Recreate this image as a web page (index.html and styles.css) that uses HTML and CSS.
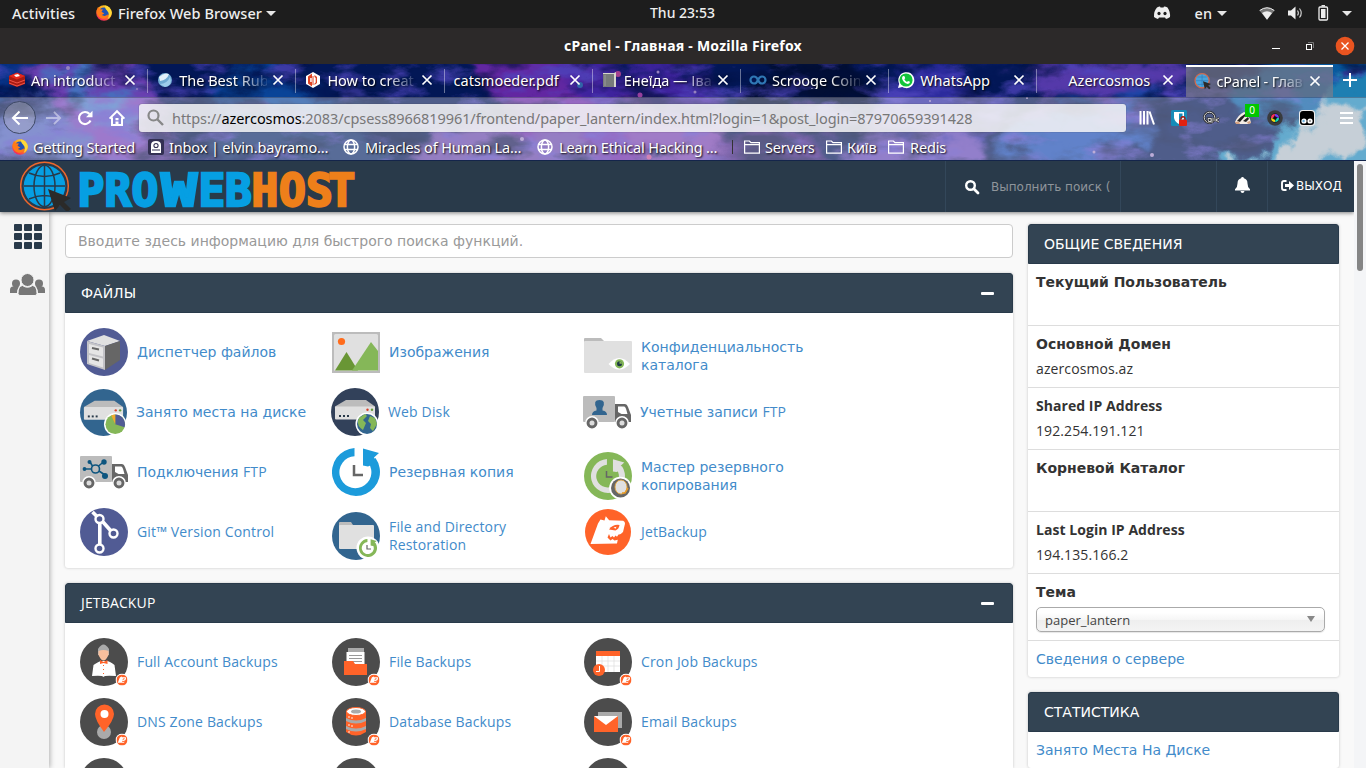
FILE: index.html
```html
<!DOCTYPE html>
<html lang="ru">
<head>
<meta charset="utf-8">
<title>cPanel - Главная</title>
<link rel="stylesheet" href="styles.css">
</head>
<body>
<svg class="defs" width="0" height="0">
  <defs>
    <linearGradient id="foxg" x1="0.8" y1="0" x2="0.2" y2="1"><stop offset="0" stop-color="#ffe226"/><stop offset=".5" stop-color="#ff8a16"/><stop offset="1" stop-color="#f5156c"/></linearGradient>
    <symbol id="fox" viewBox="0 0 16 16"><circle cx="8" cy="8" r="7.8" fill="url(#foxg)"/><circle cx="8" cy="7.4" r="5" fill="#2053b5"/><path d="M9 .4c4 1 6.600 4 6.800 7.200-.2 3-2 5.400-4.200 6.400 2-3 1.800-6-.6-8.500C9.700 4 8.600 2.200 9 .4z" fill="#ffd93a"/><path d="M.6 5.500L2 2l2 2.200 3 .3-1.500 2.300 2.800 1.600-2.500 1.700c2 1.500 5 .8 6.500-1-.5 3.500-3.500 5.400-6.500 4.500C2.500 12.600.3 9 .6 5.500z" fill="#ff7a18"/></symbol>
    <symbol id="x" viewBox="0 0 12 12"><path d="M1.500 1.500l9 9M10.500 1.500l-9 9" stroke="#fff" stroke-width="1.700" fill="none"/></symbol>
    <symbol id="globe" viewBox="0 0 16 16"><g fill="none" stroke="#fff" stroke-width="1.500"><circle cx="8" cy="8" r="7"/><ellipse cx="8" cy="8" rx="3.600" ry="7"/><path d="M1.500 5.500h13M1.500 10.500h13"/></g></symbol>
    <symbol id="folder" viewBox="0 0 16 16"><path d="M.6 14.200V2h4.800l1.600 1.600h8.400v10.600zM.6 5.600h14.800" fill="none" stroke="#fff" stroke-width="1.200"/></symbol>
    <symbol id="hostglobe" viewBox="0 0 52 50"><circle cx="24.500" cy="25" r="23.800" fill="#293a4a" stroke="#ee672c" stroke-width="1.500"/><circle cx="24.500" cy="25" r="20.800" fill="#069fe3"/><g fill="none" stroke="#293a4a" stroke-width="1.500"><ellipse cx="24.500" cy="25" rx="10.500" ry="20.800"/><path d="M24.500 4v42M4 25h41M9 12q15.500 7 31 0M9 38q15.500-7 31 0"/></g><path d="M28 28l23 9-7 4 7 7-4 3-7-7-5 6z" fill="#2b2a29"/></symbol>
    <symbol id="jb" viewBox="0 0 46 46"><circle cx="23" cy="23" r="23" fill="#ff6329"/><path d="M5.500 35l7.500-20.500 2.500-4 4 1 1.300-4.200 3.400 4 14 .4q2 .8 1.800 3L38 23l-4.500 4-1.500 7.500z" fill="#fff"/><path d="M24 20.500q4-5.500 10.500-4.500-.5 4-4 5.500z" fill="#ff6329"/><path d="M28.500 18.500l3-.8-1 2z" fill="#fff"/><path d="M24 25l1.500 3.500 2-1.500 1.500 1.500 1.500-2 1.500 1.300 1.500-2.300 5-.500-4.500 5.500-4.500 1-2-1.500-2 1.500-3-3z" fill="#ff6329"/></symbol>
    <symbol id="truck" viewBox="0 0 48 48"><rect x="0" y="8" width="32" height="26" rx="1" fill="#bcbcbc"/><path d="M32 16h10q2 0 3 3l3 8v7H32z" fill="#666"/><path d="M35 18.500h6q1.500 0 2.500 4l1 3.500h-6l-3.500-2z" fill="#fff"/><g fill="#666" stroke="#fff" stroke-width="1.500"><circle cx="9" cy="35" r="6.200"/><circle cx="39" cy="35" r="6.200"/></g><circle cx="9" cy="35" r="2.500" fill="#ddd"/><circle cx="39" cy="35" r="2.500" fill="#ddd"/></symbol>
    <symbol id="server" viewBox="0 0 48 48"><path d="M4 18.500L15 12h20l9 6.500v3H4z" fill="#bcbcbc"/><rect x="4" y="18.500" width="40" height="13" rx="1" fill="#e0e0e0"/><g fill="#293a4a"><rect x="8" y="27" width="2" height="2"/><rect x="12" y="27" width="2" height="2"/><rect x="16" y="27" width="2" height="2"/></g><circle cx="36.500" cy="21.800" r="1.200" fill="#d9412b"/><circle cx="41" cy="21.800" r="1.200" fill="#639b35"/></symbol>
    <symbol id="restore" viewBox="0 0 48 48"><path d="M22.500 0A24 24 0 1 0 43.500 10L36.500 15A16 16 0 1 1 22.500 8.200z" fill="currentColor"/><path d="M31 0.500l16 4.500-5 4.500 3 5-9 4-5-1z" fill="currentColor"/></symbol>
    <symbol id="badge" viewBox="0 0 48 48"><circle cx="24" cy="24" r="24" fill="#4c4c4c"/></symbol>
    <symbol id="mini" viewBox="0 0 13 13"><circle cx="6.500" cy="6.500" r="6.500" fill="#fff"/><use href="#jb" x="1" y="1" width="11" height="11"/></symbol>
  </defs>
</svg>

<header class="shellbar">
  <span class="activities">Activities</span>
  <svg class="i16"><use href="#fox"/></svg>
  <span class="appname">Firefox Web Browser</span>
  <i class="caret"></i>
  <span class="clock">Thu 23:53</span>
  <div class="tray">
    <svg width="18" height="14" viewBox="0 0 18 14"><path d="M4 1.500Q6 .5 7 .6l.5.9h3l.5-.9q2 0 3.500.9Q17.500 6 17 11q-2 1.700-4 2l-1-1.500H6L5 13q-2-.3-4-2Q.7 5 4 1.500z" fill="#eee"/><ellipse cx="6" cy="7.500" rx="1.600" ry="1.800" fill="#1d1d1d"/><ellipse cx="12" cy="7.500" rx="1.600" ry="1.800" fill="#1d1d1d"/></svg>
    <span class="lang">en</span><i class="caret"></i>
    <svg class="wifi" width="16" height="13" viewBox="0 0 16 13"><path d="M.5 3.500Q8-2.500 15.500 3.500L8 12.800z" fill="#777"/><path d="M3 6Q8 2.500 13 6L8 12.800z" fill="#eee"/><path d="M.7 3.500Q8-2 15.300 3.500" fill="none" stroke="#eee"/></svg>
    <svg class="vol" width="16" height="14" viewBox="0 0 16 14"><path d="M0 4.500h3L7.500.5v13L3 9.500H0z" fill="#eee"/><path d="M9.500 4.500q1.800 2.500 0 5M11.500 2.500q3.500 4.500 0 9" fill="none" stroke="#ccc" stroke-width="1.200"/></svg>
    <svg class="bat" width="11" height="16" viewBox="0 0 11 16"><rect x="1" y="2" width="8.500" height="13" rx="1" fill="none" stroke="#eee" stroke-width="1.300"/><rect x="3" y="4" width="4.500" height="9" fill="#eee"/><path d="M3.500.8h3.500" stroke="#eee" stroke-width="1.500"/></svg>
    <i class="caret"></i>
  </div>
</header>

<div class="titlebar">
  <span class="wintitle">cPanel - Главная - Mozilla Firefox</span>
  <div class="winbtns">
    <i class="min"></i>
    <svg width="10" height="10" viewBox="0 0 10 10" fill="none"><path d="M3 1.500h5.500V7" stroke="#777"/><rect x="1.500" y="3.500" width="5" height="5" stroke="#fff"/></svg>
    <svg class="close" width="20" height="20" viewBox="0 0 20 20"><circle cx="10" cy="10" r="9.300" fill="#e95420"/><path d="M6.500 6.500l7 7M13.500 6.500l-7 7" stroke="#fff" stroke-width="1.300"/></svg>
  </div>
</div>

<section class="browser">
  <svg class="sky" width="1366" height="97" viewBox="0 0 1366 97">
    <defs>
      <filter id="soft" x="-20%" y="-60%" width="140%" height="220%" color-interpolation-filters="sRGB"><feGaussianBlur stdDeviation="7" result="b"/><feTurbulence type="fractalNoise" baseFrequency=".018 .03" numOctaves="5" seed="8"/><feDisplacementMap in="b" scale="85" xChannelSelector="R" yChannelSelector="G"/></filter>
      <filter id="cloud" x="-20%" y="-20%" width="140%" height="140%" color-interpolation-filters="sRGB"><feGaussianBlur stdDeviation="2.500" result="b"/><feTurbulence type="fractalNoise" baseFrequency=".04" numOctaves="4" seed="3"/><feDisplacementMap in="b" scale="32" xChannelSelector="R" yChannelSelector="G"/></filter>
      <filter id="dust" x="0" y="0" width="100%" height="100%" color-interpolation-filters="sRGB"><feTurbulence type="fractalNoise" baseFrequency=".022 .05" numOctaves="6" seed="21"/><feColorMatrix values="0 0 0 0 .45  0 0 0 0 .38  0 0 0 0 1  4 0 0 0 -2.050"/></filter>
      <filter id="dark" x="0" y="0" width="100%" height="100%" color-interpolation-filters="sRGB"><feTurbulence type="fractalNoise" baseFrequency=".015 .035" numOctaves="5" seed="5"/><feColorMatrix values="0 0 0 0 0  0 0 0 0 .07  0 0 0 0 .27  0 4 0 0 -2.050"/></filter>
    </defs>
    <rect width="1366" height="97" fill="#041f6b"/>
    <g filter="url(#soft)">
      <path d="M30-20L110-10 220 120H90z" fill="#9a55ea"/><path d="M-10 60L60 40 120 120H-20z" fill="#6b83f0"/><path d="M55-10l30 0 45 60-30 10z" fill="#62a0ff"/><path d="M200 20l70-30 60 60-70 30z" fill="#0e5fc9"/><path d="M-20-10h70l-40 50z" fill="#0a49b5"/><path d="M240 50h130l20 60H220z" fill="#163d86"/>
      <path d="M460-20h130l170 130H540z" fill="#8d35d6"/><path d="M560-10h120l60 60H600z" fill="#5a30d0"/><path d="M440 60h110l60 60H400z" fill="#8a5fd8"/><path d="M610 60h120l30 50H640z" fill="#a05ae0"/><path d="M750 60h90l-40 60H700z" fill="#5a2ea8"/>
      <path d="M880 10l110-20 10 70-120 60z" fill="#3f3bd0"/><path d="M1020-10h180l-50 50-110-10z" fill="#7a50e2"/><path d="M1050 40h120l-90 60h-100z" fill="#2767e6"/><path d="M870 60h90l20 60H840z" fill="#8560e8"/><path d="M1230 0l150-30v90h-130z" fill="#0a7ad0"/><path d="M760-10h110v60H760z" fill="#02123a"/>
    </g>
    <rect width="1366" height="97" filter="url(#dust)" opacity=".75"/>
    <rect width="1366" height="97" filter="url(#dark)" opacity=".7"/>
    <g filter="url(#cloud)"><path d="M1190 115l35-22 40 4 15-30 40-16 12-30 50-15V115z" fill="#2cb4ee"/><path d="M1215 120l20-22 40 4 20-32 22-12 10-26 22 8 20 0-4 38-50 24-20 18z" fill="#e8faff"/></g>
    <g fill="#d6b7ff"><circle cx="68" cy="4" r="2"/><circle cx="137" cy="25" r="1"/><circle cx="209" cy="17" r="1"/><circle cx="618" cy="10" r="3" fill="#e858b9"/><circle cx="658" cy="8" r="1.500"/><circle cx="640" cy="31" r="2.500" fill="#d858ce"/><circle cx="580" cy="21" r="3" fill="#458ddf"/><circle cx="562" cy="61" r="7" fill="#7ac7ff" opacity=".5"/><circle cx="522" cy="75" r="2"/><circle cx="649" cy="93" r="2.500" fill="#ff68bd"/><circle cx="695" cy="28" r="1.500"/><circle cx="1094" cy="88" r="1.500"/><circle cx="1152" cy="91" r="2"/><circle cx="1027" cy="34" r="1"/><circle cx="930" cy="37" r="1"/></g>
  </svg>
  <div class="chrome">
    <nav class="tabs">
      <div class="tab"><svg class="fav" viewBox="0 0 16 16"><path d="M0 4l8-3 8 3v8l-8 3-8-3z" fill="#a91b12"/><path d="M0 4l8-3.500L16 4 8 7.500z" fill="#e5281d"/><path d="M0 8l8 3 8-3M0 11l8 3 8-3" stroke="#f05448" fill="none"/><path d="M5 3l4-1 2 2-4 1z" fill="#fff"/></svg><span>An introduct</span><svg class="cl"><use href="#x"/></svg></div>
      <div class="tab"><svg class="fav" viewBox="0 0 16 16"><circle cx="8" cy="8" r="7" fill="#6ea9d2"/><path d="M2 5q5-5 10-3Q10 8 3 9z" fill="#e3f2fa"/><path d="M3 12q7 0 10-7 3 8-5 10z" fill="#9dccea"/></svg><span>The Best Rub</span><svg class="cl"><use href="#x"/></svg></div>
      <div class="tab"><svg class="fav" viewBox="0 0 16 16"><path d="M8 0l7 4v8l-7 4-7-4V4z" fill="#fff"/><path d="M7 1.500L3 4.500v7l4 3zM9.500 3l2.500 2v6l-2.500 2v-1.500l1.200-1V6L9.500 5z" fill="#df4323"/><path d="M5.200 6h1.500v4H5.200z" fill="#fff"/><path d="M8 4v9" stroke="#df4323"/></svg><span>How to creat</span><svg class="cl"><use href="#x"/></svg></div>
      <div class="tab noicon"><span>catsmoeder.pdf</span><svg class="cl"><use href="#x"/></svg></div>
      <div class="tab"><svg class="fav" viewBox="0 0 16 16"><path d="M1 1h11l2-1v15H2l-1-1z" fill="#d6d6ce"/><path d="M1 2h11v13H2l-1-1z" fill="#777b7b"/><path d="M3 3v11" stroke="#999"/></svg><span>Енеїда — Іва</span><svg class="cl"><use href="#x"/></svg></div>
      <div class="tab"><svg class="fav" viewBox="0 0 16 16"><path d="M8 8Q6.500 4.500 4 4.500a3.400 3.400 0 0 0 0 7Q6.500 11.500 8 8q1.500-3.500 4-3.500a3.400 3.400 0 0 1 0 7Q9.500 11.500 8 8z" fill="none" stroke="#2f78b5" stroke-width="2.200"/></svg><span>Scrooge Coin</span><svg class="cl"><use href="#x"/></svg></div>
      <div class="tab"><svg class="fav" viewBox="0 0 16 16"><path d="M0 16l1.200-4.200A8 8 0 1 1 4.200 15z" fill="#fff"/><circle cx="8" cy="8" r="6.600" fill="#12c53b"/><path d="M5 4l1.500.2.700 2-.9 1Q7.500 9.500 9 10l1-1 2 .8q0 2-2.200 2.200Q5 11 4 6.200 4.100 4.700 5 4z" fill="#fff"/></svg><span class="whole">WhatsApp</span><svg class="cl"><use href="#x"/></svg></div>
      <div class="tab last"><i class="fav"></i><span>Azercosmos</span><svg class="cl"><use href="#x"/></svg></div>
      <div class="tab active"><svg class="fav" viewBox="0 0 52 50"><circle cx="23" cy="24" r="23" fill="#4aa4dd" stroke="#d26a4e" stroke-width="4"/><path d="M23 4v40M3 24h40M8 12h30M8 36h30" stroke="#2d7bb5" stroke-width="2"/><path d="M26 26l26 9-9 5 8 8-5 4-8-8-6 8z" fill="#2b2a29"/></svg><span>cPanel - Глав</span><svg class="cl"><use href="#x"/></svg></div>
      <svg class="plus" width="14" height="14" viewBox="0 0 14 14"><path d="M7 0v14M0 7h14" stroke="#fff" stroke-width="2"/></svg>
    </nav>
    <div class="toolbar">
      <span class="back"><svg width="18" height="16" viewBox="0 0 18 16"><path d="M17 8H2M8.500 1.500L2 8l6.500 6.500" fill="none" stroke="#fff" stroke-width="2"/></svg></span>
      <svg class="fwd" width="17" height="16" viewBox="0 0 18 16"><path d="M1 8h15M9.500 1.500L16 8l-6.500 6.500" fill="none" stroke="#fff" stroke-width="2" opacity=".45"/></svg>
      <svg class="reload" width="16" height="16" viewBox="0 0 16 16"><path d="M13.500 10.500A6 6 0 1 1 12.500 4" fill="none" stroke="#fff" stroke-width="2.200"/><path d="M15.500.8v6.500H9z" fill="#fff"/></svg>
      <svg class="home" width="16" height="16" viewBox="0 0 16 16"><path d="M.6 8.600L8 1.200l7.400 7.400M3 7.500V15h10V7.500" fill="none" stroke="#fff" stroke-width="2"/><path d="M6.500 8h3v2.200h-3zM6.500 11.500h3V15h-3z" fill="#fff"/></svg>
      <div class="url"><svg width="17" height="17" viewBox="0 0 17 17"><circle cx="6.500" cy="6.500" r="5" fill="none" stroke="#888" stroke-width="2.200"/><path d="M10 10l6 6" stroke="#888" stroke-width="2.400"/></svg><span>https://<b>azercosmos</b>:2083/cpsess8966819961/frontend/paper_lantern/index.html?login=1&amp;post_login=87970659391428</span></div>
      <div class="exts">
        <svg width="16" height="16" viewBox="0 0 16 16"><path d="M1.500 1v13.500M5 1v13.500M8.500 1v13.500M10.500 1.500l4.500 13" stroke="#fff" stroke-width="2" fill="none"/></svg>
        <svg width="16" height="16" viewBox="0 0 16 16"><rect width="16" height="16" rx="1.500" fill="#168cb8"/><path d="M3 2h10v6q-1 4-5 6-4-2-5-6z" fill="#fff"/><path d="M8 3.500h3.500V8L8 12z" fill="#168cb8"/><rect x="8" y="9.500" width="8" height="6.500" rx="1" fill="#e22110"/><path d="M10 9.500V8q2-2.500 4 0v1.500" fill="none" stroke="#b01508" stroke-width="1.300"/></svg>
        <svg width="16" height="16" viewBox="0 0 16 16"><circle cx="6.500" cy="7.500" r="5.300" fill="none" stroke="#222" stroke-width="2.400"/><circle cx="6.500" cy="7.500" r="5.300" fill="none" stroke="#ddd" stroke-width="1"/><path d="M5 8.500h3v3H5.500zM9 8v5M11 8v3M13 8.500v3M13 10l3-2M13 10l3 2" stroke="#222" stroke-width="2.200" fill="none"/><path d="M5 8.500h3v3H5.500zM9 8v5M11 8v3M13 8.500v3M13 10l3-2M13 10l3 2" stroke="#e5e5e5" stroke-width=".9" fill="none"/></svg>
        <span class="badger"><svg width="16" height="16" viewBox="0 0 16 16"><path d="M0 12Q3 5 9 2l2 1 4 6 1 4-3 1-11 0z" fill="#f3ece6"/><path d="M2 11q4-5 8-7l1 1-6 7zM8 11l5-4 1 2-3 3z" fill="#222"/><path d="M0 12l4-.500 1 2.500-4 0zM12 12l3-1 1 2-3 1z" fill="#d9a483"/></svg><b>0</b></span>
        <svg width="16" height="16" viewBox="0 0 16 16"><circle cx="8" cy="8" r="7.800" fill="#393b3d"/><circle cx="8" cy="8" r="4.600" fill="#111"/><path d="M8 4a4 4 0 0 0-4 4h3z" fill="#ff335c"/><path d="M4 8a4 4 0 0 0 4 4V9z" fill="#efd516"/><path d="M8 12a4 4 0 0 0 4-4H9z" fill="#10d7b4"/><path d="M12 8a4 4 0 0 0-4-4v3z" fill="#743df3"/><circle cx="8" cy="8" r="1.800" fill="#111"/></svg>
        <svg width="16" height="16" viewBox="0 0 16 16"><rect width="16" height="16" rx="3.500" fill="#eee"/><rect x="1" y="1" width="14" height="14" rx="3" fill="#000"/><circle cx="5" cy="11" r="2.600" fill="#fff"/><circle cx="11" cy="11" r="2.600" fill="#fff"/><circle cx="4.600" cy="11" r="1.200" fill="#6eb4df"/><circle cx="11" cy="11" r="1" fill="#888"/></svg>
        <i class="burger"></i>
      </div>
    </div>
    <div class="bookmarks">
      <a class="k1"><svg class="i16"><use href="#fox"/></svg>Getting Started</a>
      <a class="k2"><svg class="i16" viewBox="0 0 16 16"><rect width="16" height="16" rx="2" fill="#333053"/><path d="M3 6q0-4 5-4t5 4v8H3z" fill="#fff"/><circle cx="8" cy="6.500" r="2.600" fill="#333053"/><circle cx="8" cy="6.500" r="1.500" fill="#fff"/><path d="M4 11h8" stroke="#333053"/></svg>Inbox | elvin.bayramo…</a>
      <a class="k3"><svg class="i16"><use href="#globe"/></svg>Miracles of Human La…</a>
      <a class="k4"><svg class="i16"><use href="#globe"/></svg>Learn Ethical Hacking …</a>
      <i class="bsep"></i>
      <a class="k5"><svg class="i16"><use href="#folder"/></svg>Servers</a>
      <a class="k6"><svg class="i16"><use href="#folder"/></svg>Київ</a>
      <a class="k7"><svg class="i16"><use href="#folder"/></svg>Redis</a>
    </div>
  </div>
</section>

<div class="page">
  <header class="cphead">
    <svg class="logo" width="340" height="51" viewBox="0 0 340 51"><use href="#hostglobe" x="0" y="0" width="52" height="50"/><g class="logotext"><g fill="#069fe3" stroke="#069fe3"><text x="57.500 84.500 111.500" y="44.500">PRO</text><text x="141" y="44.500" textLength="36" lengthAdjust="spacingAndGlyphs">W</text><text x="178.500 205" y="44.500">EB</text></g><text x="231.500 259 286 308.500" y="44.500" fill="#ee7f1a" stroke="#ee7f1a">HOST</text></g></svg>
    <div class="hcell search"><svg width="14" height="14" viewBox="0 0 14 14"><circle cx="5.500" cy="5.500" r="4.300" fill="none" stroke="#fff" stroke-width="2.400"/><path d="M9 9l4 4" stroke="#fff" stroke-width="2.800" stroke-linecap="round"/></svg><span>Выполнить поиск (</span></div>
    <div class="hcell user"></div>
    <div class="hcell bell"><svg width="15" height="16" viewBox="0 0 15 16"><path d="M7.500 0q1.300 0 1.400 1.300 3.600 1 3.600 5.200 0 4 2.500 5.800V13.500H0v-1.200q2.500-1.800 2.500-5.800 0-4.200 3.600-5.200Q6.200 0 7.500 0zM5.500 14h4q-.3 2-2 2t-2-2z" fill="#fff"/></svg></div>
    <div class="hcell exit"><svg width="13" height="11" viewBox="0 0 13 11"><path d="M5.500 1H3Q1 1 1 3v5q0 2 2 2h2.500" fill="none" stroke="#fff" stroke-width="1.900"/><path d="M4 4h4V1l5 4.500L8 10V7H4z" fill="#fff"/></svg><span>ВЫХОД</span></div>
  </header>
  <div class="body">
    <aside class="rail">
      <svg width="28" height="25" viewBox="0 0 28 25" fill="#293a4a"><g id="r"><rect width="8" height="7" rx="1"/><rect x="10" width="8" height="7" rx="1"/><rect x="20" width="8" height="7" rx="1"/></g><use href="#r" y="9"/><use href="#r" y="18"/></svg>
      <svg width="36" height="22" viewBox="0 0 36 22" fill="#777"><circle cx="6" cy="9.500" r="4"/><circle cx="29" cy="9.500" r="4"/><path d="M0 19v-3q0-3.500 3-3.500h6q-2 3-2 6.500zM35 19v-3q0-3.500-3-3.500h-6q2 3 2 6.500z"/><circle cx="17.500" cy="6" r="6.500" stroke="#f4f4f4"/><path d="M8 19.500q0-7.500 4.500-8 5 3.500 10 0 4.500.5 4.500 8 0 2-2 2H10q-2 0-2-2z" stroke="#f4f4f4"/></svg>
    </aside>
    <main>
      <div class="find">Вводите здесь информацию для быстрого поиска функций.</div>
      <section class="panel">
        <h2><span>ФАЙЛЫ</span><i></i></h2>
        <div class="grid">
          <a><svg viewBox="0 0 48 48"><circle cx="24" cy="24" r="24" fill="#515b94"/><path d="M7 13l17-6 16 6-15 5z" fill="#e0e0e0"/><path d="M7 13l18 5v24L7 36z" fill="#c3c3c7"/><path d="M25 18l15-5v19l-15 10z" fill="#666"/><path d="M9 16l14 3.500v9L9 25zM9 27l14 3.500v9L9 35z" fill="#e5e5e5"/><path d="M12 20l7 1.500M12 30.500l7 2" stroke="#666" stroke-width="2"/></svg><span>Диспетчер файлов</span></a>
          <a><svg viewBox="0 0 48 48"><rect y="4" width="48" height="41" fill="#bcbcbc"/><rect x="2" y="6" width="44" height="37" rx="1.500" fill="#e0e0e0"/><circle cx="9.500" cy="13.500" r="3.600" fill="#ff6c1c"/><path d="M3 42.500L14.500 24 26 42.500z" fill="#699635"/><path d="M20 42.500L39 14l7 9v19.500z" fill="#85b758"/></svg><span>Изображения</span></a>
          <a class="two"><svg viewBox="0 0 48 48"><path d="M0 10V7q0-1 1-1h16l3 3v3H0z" fill="#bcbcbc"/><rect y="9" width="48" height="32" rx="1" fill="#e0e0e0"/><path d="M24.500 32Q35 20 46 32 35 43 24.500 32z" fill="#fff"/><circle cx="35.500" cy="31.800" r="4.600" fill="#85b758"/><circle cx="35.500" cy="31.800" r="2.500" fill="#1f3845"/><path d="M35.500 31.800v-2.500q2.500 0 2.500 2.500z" fill="#85b758"/></svg><span>Конфиденциальность<br>каталога</span></a>
          <a class="narrow"><svg viewBox="0 0 48 48"><circle cx="24" cy="24" r="24" fill="#32658f"/><use href="#server" width="48" height="48"/><circle cx="36" cy="36" r="11.500" fill="#fff"/><circle cx="36" cy="36" r="10" fill="#85b758"/><path d="M36 36V26a10 10 0 0 1 9.500 13z" fill="#515b94"/><path d="M36 36V26q-2 0-4 1z" fill="#efaa2d"/></svg><span>Занято места на диске</span></a>
          <a class="nudge"><svg viewBox="0 0 48 48"><circle cx="24" cy="24" r="24" fill="#32415a"/><use href="#server" width="48" height="48"/><circle cx="36" cy="36" r="11.500" fill="#fff"/><circle cx="36" cy="36" r="10" fill="#32658f"/><path d="M28 30l6-4 2 2-4 4 3 3-3 7q-6-4-5-9zM39 28l5 2 2 6-4 7-3-3 1-4-3-3z" fill="#85b758"/></svg><span class="lat">Web Disk</span></a>
          <a class="nudge"><svg viewBox="0 0 48 48"><use href="#truck" width="48" height="48"/><path d="M9 27q0-4 4.500-4.500V20q-4-8 3-8t3 8v2.500Q24 23 24 27z" fill="#32658f"/></svg><span>Учетные записи <b class="lat">FTP</b></span></a>
          <a><svg viewBox="0 0 48 48"><use href="#truck" width="48" height="48"/><g stroke="#0d557f" stroke-width="1.600" fill="none"><circle cx="15.500" cy="21" r="4"/><path d="M12.500 18L10 14M18.500 18l5-4M11 21H5M19 23l6 4"/></g><g fill="#0d557f"><circle cx="9.500" cy="14" r="2"/><circle cx="24" cy="14" r="2.700"/><circle cx="4.500" cy="21" r="1.900"/><circle cx="25" cy="28" r="3"/></g></svg><span>Подключения <b class="lat">FTP</b></span></a>
          <a><svg viewBox="0 0 48 48" color="#1c9bdb"><use href="#restore" width="48" height="48"/><path d="M22 17v10h9" stroke="#666" stroke-width="2.500" fill="none"/></svg><span>Резервная копия</span></a>
          <a class="two"><svg viewBox="0 0 48 48" color="#e0e0e0"><circle cx="24" cy="24" r="24" fill="#85b758"/><use href="#restore" x="7" y="7" width="34" height="34"/><path d="M22.500 19v6h6" stroke="#666" stroke-width="1.500" fill="none"/><circle cx="36.500" cy="36" r="11.300" fill="#fff"/><circle cx="36.500" cy="36" r="9.500" fill="#666"/><ellipse cx="37" cy="35" rx="6" ry="7" fill="#e0e0e0" stroke="#e7a73c" stroke-width=".9"/><path d="M38 41h3l3-5" fill="none" stroke="#e79b27" stroke-width="1.500"/></svg><span>Мастер резервного<br>копирования</span></a>
          <a><svg viewBox="0 0 48 48"><circle cx="24" cy="24" r="24" fill="#515b94"/><g fill="none" stroke="#fff" stroke-width="3.600"><path d="M12.500 4l5 5M19.800 15v21M23 14l8 9"/><circle cx="19.500" cy="11" r="4" stroke-width="2.400"/><circle cx="33.500" cy="25.500" r="4" stroke-width="2.400"/><circle cx="19.500" cy="40.500" r="4" stroke-width="2.400"/></g></svg><span class="lat">Git™ Version Control</span></a>
          <a class="two"><svg viewBox="0 0 48 48" color="#85b758"><circle cx="24" cy="24" r="24" fill="#32658f"/><path d="M7 13v-2q0-1 1-1h11l2 3v3H7z" fill="#bcbcbc"/><rect x="7" y="13" width="35" height="24" rx="1" fill="#e0e0e0"/><circle cx="36" cy="36" r="11.500" fill="#fff"/><use href="#restore" x="27" y="27" width="18" height="18"/><path d="M35 33v4h4" stroke="#666" stroke-width="1.200" fill="none"/></svg><span class="lat">File and Directory<br>Restoration</span></a>
          <a><svg viewBox="0 0 48 48"><use href="#jb" x="1" y="1" width="46" height="46"/></svg><span class="lat">JetBackup</span></a>
        </div>
      </section>
      <section class="panel">
        <h2><span class="lat">JETBACKUP</span><i></i></h2>
        <div class="grid">
          <a><svg viewBox="0 0 48 48"><use href="#badge" width="48" height="48"/><path d="M12 38l1.500-11q6-4 8-4h5q3 0 8 4L36 38q-12-1-12.500 1-1-2-11.500-1z" fill="#fff"/><path d="M18 11q5.500-9 11 0v6H18z" fill="#aaa"/><path d="M18.500 13q5-2 10 0v4q-5 11-10 0z" fill="#f8bf9d"/><path d="M20 22l3.500 2 4-2v4l-4-1-3.500 1z" fill="#ff6329"/><path d="M23.500 27v11" stroke="#ff6329" stroke-dasharray="1 3"/><use href="#mini" x="35.500" y="35.500" width="13" height="13"/></svg><span class="lat">Full Account Backups</span></a>
          <a><svg viewBox="0 0 48 48"><use href="#badge" width="48" height="48"/><rect x="16" y="10" width="16" height="8" fill="#aaa"/><rect x="14.500" y="14" width="18" height="19" fill="#fff"/><path d="M17 17.500h13M17 20.500h13M21 23.500h9" stroke="#999"/><path d="M12 23h9l2 3h12v11H12z" fill="#ff6329"/><use href="#mini" x="35.500" y="35.500" width="13" height="13"/></svg><span class="lat">File Backups</span></a>
          <a><svg viewBox="0 0 48 48"><use href="#badge" width="48" height="48"/><rect x="12" y="13" width="24" height="21" fill="#fff"/><path d="M12 23h24M12 28h24M18 18v16M24 18v16M30 18v16" stroke="#ddd" stroke-width=".7"/><rect x="12" y="13" width="24" height="5" fill="#ff6329"/><circle cx="15" cy="32" r="6" fill="#ff6329"/><path d="M15.500 28v5.500H12" stroke="#fff" fill="none"/><use href="#mini" x="35.500" y="35.500" width="13" height="13"/></svg><span class="lat">Cron Job Backups</span></a>
          <a><svg viewBox="0 0 48 48"><use href="#badge" width="48" height="48"/><circle cx="24" cy="34" r="7" fill="#aaa"/><path d="M24 34q-9-12-9-18a9 9 0 0 1 19 0q0 6-10 18z" fill="#ff6329"/><circle cx="24.500" cy="16" r="4" fill="#fff"/><use href="#mini" x="35.500" y="35.500" width="13" height="13"/></svg><span class="lat">DNS Zone Backups</span></a>
          <a><svg viewBox="0 0 48 48"><use href="#badge" width="48" height="48"/><path d="M14 13h20v21q-10 7-20 0z" fill="#ff6329"/><path d="M14 20q10 5 20 0v3q-10 5-20 0zM14 28q10 5 20 0v3q-10 5-20 0z" fill="#aaa"/><ellipse cx="24" cy="13.500" rx="9.500" ry="4" fill="#fff" stroke="#ff6329"/><ellipse cx="24" cy="13.500" rx="5" ry="2" fill="#aaa"/><g fill="#fff"><circle cx="17" cy="19" r=".8"/><circle cx="20" cy="20" r=".8"/><circle cx="17" cy="27" r=".8"/><circle cx="20" cy="28" r=".8"/><circle cx="17" cy="34" r=".8"/></g><use href="#mini" x="35.500" y="35.500" width="13" height="13"/></svg><span class="lat">Database Backups</span></a>
          <a><svg viewBox="0 0 48 48"><use href="#badge" width="48" height="48"/><rect x="14" y="14" width="24" height="16" fill="#aaa"/><rect x="10" y="18" width="24" height="16" fill="#ff6329"/><path d="M10 18h24l-12 9z" fill="#fff"/><use href="#mini" x="35.500" y="35.500" width="13" height="13"/></svg><span class="lat">Email Backups</span></a>
          <a><svg viewBox="0 0 48 48"><use href="#badge" width="48" height="48"/></svg></a>
          <a><svg viewBox="0 0 48 48"><use href="#badge" width="48" height="48"/></svg></a>
          <a><svg viewBox="0 0 48 48"><use href="#badge" width="48" height="48"/></svg></a>
        </div>
      </section>
    </main>
    <aside class="info">
      <section class="card">
        <h2>ОБЩИЕ СВЕДЕНИЯ</h2>
        <div class="row"><h3>Текущий Пользователь</h3></div>
        <div class="row"><h3>Основной Домен</h3><p>azercosmos.az</p></div>
        <div class="row"><h3 class="lat">Shared IP Address</h3><p>192.254.191.121</p></div>
        <div class="row"><h3>Корневой Каталог</h3></div>
        <div class="row"><h3 class="lat">Last Login IP Address</h3><p>194.135.166.2</p></div>
        <div class="row theme"><h3>Тема</h3><div class="select">paper_lantern<i></i></div></div>
        <div class="row link"><a>Сведения о сервере</a></div>
      </section>
      <section class="card">
        <h2>СТАТИСТИКА</h2>
        <div class="row link"><a>Занято Места На Диске</a></div>
      </section>
    </aside>
    <div class="scroll"><i></i></div>
  </div>
</div>
</body>
</html>
```
FILE: styles.css
```css
* { box-sizing: border-box; }
html { overflow: hidden; }
body { margin: 0; width: 1366px; height: 768px; overflow: hidden; display: flex; flex-direction: column; background: #f9f9f9; font: 14px/18px "DejaVu Sans", sans-serif; color: #333; }
svg { display: block; flex: none; overflow: visible; }
.defs { position: absolute; }
.i16 { width: 16px; height: 16px; }
.lat { font-family: "Open Sans", sans-serif; letter-spacing: .15px; }

.shellbar, .titlebar, .browser { font-family: "Noto Sans", sans-serif; font-size: 14.500px; flex: none; }
.shellbar { height: 28px; background: #1d1d1d; color: #eee; display: grid; grid-template-columns: 84px 22px 148px 384px 1fr auto; align-items: center; padding: 0 14px 2px 12px; font-weight: 500; }
.shellbar span { white-space: nowrap; }
.shellbar .activities, .shellbar .appname { letter-spacing: .07px; }
.shellbar .caret { justify-self: start; }
.caret { width: 0; border: 5px solid transparent; border-top-color: #e6e6e6; border-bottom: 0; }
.clock { grid-column: 5; font-size: 14px; }
.shellbar > .caret { width: 10px; }
.tray { display: flex; align-items: center; }
.lang { margin: 0 5px 0 24px; }
.wifi { margin-left: 32px; }
.vol { margin-left: 13px; }
.bat { margin: 0 13px 0 14px; }

.titlebar { height: 36px; background: #2c2929; color: #fff; font-weight: 700; font-size: 14px; letter-spacing: .24px; display: grid; grid-template-columns: 1fr auto 1fr; align-items: center; }
.wintitle { grid-column: 2; }
.winbtns { display: flex; justify-content: flex-end; align-items: center; padding-right: 11px; }
.min { width: 8px; height: 1px; background: #fff; margin: 4px 25px 0 0; }
.winbtns .close { margin-left: 20px; }

.browser { height: 97px; position: relative; overflow: hidden; color: #fff; }
.sky { position: absolute; left: 0; top: 0; }
.chrome { position: relative; text-shadow: 1px 1px 2px #000; }
.tabs { height: 33px; display: flex; background: rgba(0,6,40,.3); }
.tab { width: 148.200px; padding: 0 12px 2px 9px; display: flex; align-items: center; position: relative; }
.tab::after { content: ""; position: absolute; right: 0; top: 5px; height: 24px; border-right: 1px solid rgba(255,255,255,.4); }
.tab.last::after, .tab.active::after { display: none; }
.fav { width: 16px; height: 16px; flex: none; margin-right: 6px; }
.tab span { flex: 1; min-width: 0; white-space: nowrap; -webkit-mask-image: linear-gradient(90deg, #000 65%, rgba(0,0,0,.15) 98%); mask-image: linear-gradient(90deg, #000 65%, rgba(0,0,0,.15) 98%); }
.noicon span, .last span, .tab .whole { -webkit-mask-image: none; mask-image: none; }
.cl { width: 12px; height: 12px; margin-left: 5px; }
.tab.active { background: rgba(125,125,138,.7); border-top: 2px solid #fff; margin-top: 1px; padding-bottom: 3px; height: 32px; width: 147px; }
.tab.active span { letter-spacing: -.2px; }
.plus { margin: 9px 0 0 10px; }
.toolbar { height: 41px; display: flex; align-items: center; background: rgba(160,160,172,.48); border-top: 1px solid rgba(30,35,60,.35); padding-bottom: 1px; }
.back { width: 33px; height: 33px; border-radius: 50%; background: rgba(180,180,195,.35); border: 1px solid #3e4966; margin-left: 3px; display: flex; align-items: center; justify-content: center; }
.fwd { margin-left: 9px; }
.reload { margin-left: 15px; }
.home { margin-left: 16px; }
.url { margin-left: 14px; width: 987px; height: 28px; border-radius: 3px; background: rgba(244,244,246,.86); display: flex; align-items: center; padding-left: 8px; color: #777; text-shadow: none; box-shadow: 0 0 1px #333; white-space: nowrap; letter-spacing: -.067px; }
.url svg { margin-right: 8px; }
.url b { color: #000; font-weight: 400; }
.exts { display: flex; align-items: center; gap: 16px; margin-left: 13px; }
.badger { position: relative; }
.badger b { position: absolute; left: 10px; top: -6px; width: 14px; height: 13px; background: #00c800; font: 10px/13px "Noto Sans", sans-serif; text-align: center; text-shadow: none; }
.burger { width: 13px; height: 12px; margin-left: 9px; border: solid #fff; border-width: 2px 0; background: linear-gradient(#fff, #fff) 0 3px/13px 2px no-repeat; }
.bookmarks { height: 23px; background: rgba(160,160,172,.48); display: flex; align-items: center; padding-left: 12px; padding-bottom: 4px; border-bottom: 1px solid #14254b; letter-spacing: -.14px; }
.bookmarks a { display: flex; align-items: center; white-space: nowrap; gap: 5px; }
.k1 { width: 136px; } .k2 { width: 195px; } .k3 { width: 194px; } .k4 { width: 195px; } .k5 { width: 82px; } .k6 { width: 62px; }
.bookmarks .k3, .bookmarks .k4, .bookmarks .k7 { gap: 6px; }
.bsep { height: 14px; width: 12px; border-left: 1px solid #333; }

.page { flex: 1; display: flex; flex-direction: column; min-height: 0; overflow: hidden; }
.cphead { height: 51px; width: 1354px; flex: none; background: #293a4a; display: flex; padding-left: 20px; box-shadow: 0 1px 4px rgba(0,0,0,.5); position: relative; z-index: 2; }
.logo { margin-right: auto; }
.logotext text { font: 700 44.500px "DejaVu Sans Mono", monospace; stroke-width: 2.400px; stroke-linejoin: miter; }
.hcell { border-left: 1px solid #33475a; display: flex; align-items: center; color: #fff; height: 51px; font-size: 12px; }
.search { width: 175px; padding-left: 19px; gap: 12px; color: #8f959b; }
.user { width: 96px; } .bell { width: 51px; padding: 0 0 3px 18px; } .exit { width: 87px; padding: 0 0 2px 13px; gap: 2px; }
.body { flex: 1; min-height: 0; display: flex; }
.rail { width: 49px; background: #f4f4f4; box-shadow: 1px 0 5px rgba(0,0,0,.3); padding: 12px 0 0 10px; display: flex; flex-direction: column; gap: 25px; }
.rail svg:first-child { margin-left: 4px; }
main { width: 948px; margin: 12px 0 0 16px; display: flex; flex-direction: column; gap: 15px; overflow: clip; overflow-clip-margin: 6px; }
.find { height: 34px; flex: none; border: 1px solid #ccc; border-radius: 4px; background: #fff; color: #999; padding: 7px 12px; }
.panel, .card { flex: none; background: #fff; border-radius: 3px; box-shadow: 0 0 3px rgba(0,0,0,.22); }
.panel:last-child { flex: 1 1 0; min-height: 0; overflow: hidden; border-radius: 3px 3px 0 0; }
h2 { margin: 0; height: 40px; background: #334453; border: 1px solid #293a4a; border-radius: 3px 3px 0 0; color: #fff; font-size: 14px; font-weight: 400; display: flex; align-items: center; justify-content: space-between; padding: 0 18px 0 15px; }
h2 i { width: 13px; height: 3px; background: #fff; border-radius: 1px; margin-top: 1px; }
.grid { display: grid; grid-template-columns: repeat(3, 252px); grid-auto-rows: 60px; padding: 15px 15px 0; }
.grid a { height: 48px; display: flex; align-items: center; gap: 9px; color: #428bca; white-space: nowrap; }
.grid svg { width: 48px; height: 48px; }
.grid b { font-weight: 400; }
.grid a.two { margin-top: 4px; }
.grid a.narrow svg { width: 47px; height: 47px; }
.grid a.nudge { margin-left: -1px; }
.info { width: 311px; margin: 12px 15px 0; display: flex; flex-direction: column; gap: 15px; }
.card:last-child { flex: 1 1 0; min-height: 0; }
.card h2 { padding-left: 15px; }
.row { height: 62px; border-bottom: 1px solid #ddd; padding: 9px 8px 0; }
h3 { margin: 0; font: 700 14px/18px "DejaVu Sans", sans-serif; }
h3.lat { font-family: "Open Sans", sans-serif; letter-spacing: .05px; }
.row p { margin: 7px 0 0; font-family: "Open Sans", sans-serif; letter-spacing: .1px; }
.row.theme { height: 67px; }
.row.link { height: 36px; border: 0; }
.row a { color: #428bca; }
.select { font: 13px/23px "Open Sans", sans-serif; width: 289px; height: 25px; margin-top: 6px; border: 1px solid #aaa; border-radius: 5px; background: linear-gradient(#fff 20%, #f6f6f6 50%, #eee 52%, #f4f4f4); padding: 1px 9px 0 8px; display: flex; justify-content: space-between; align-items: center; color: #444; box-shadow: 0 1px 1px rgba(0,0,0,.1); }
.select i { border: 4px solid transparent; border-top: 6px solid #888; border-bottom: 0; margin-top: -3px; }
.scroll { width: 12px; background: #f4f5f7; padding-left: 3px; position: relative; margin-top: -51px; z-index: 3; }
.scroll i { display: block; width: 6px; height: 107px; border-radius: 3px; background: #858585; margin-top: 3px; }
```
